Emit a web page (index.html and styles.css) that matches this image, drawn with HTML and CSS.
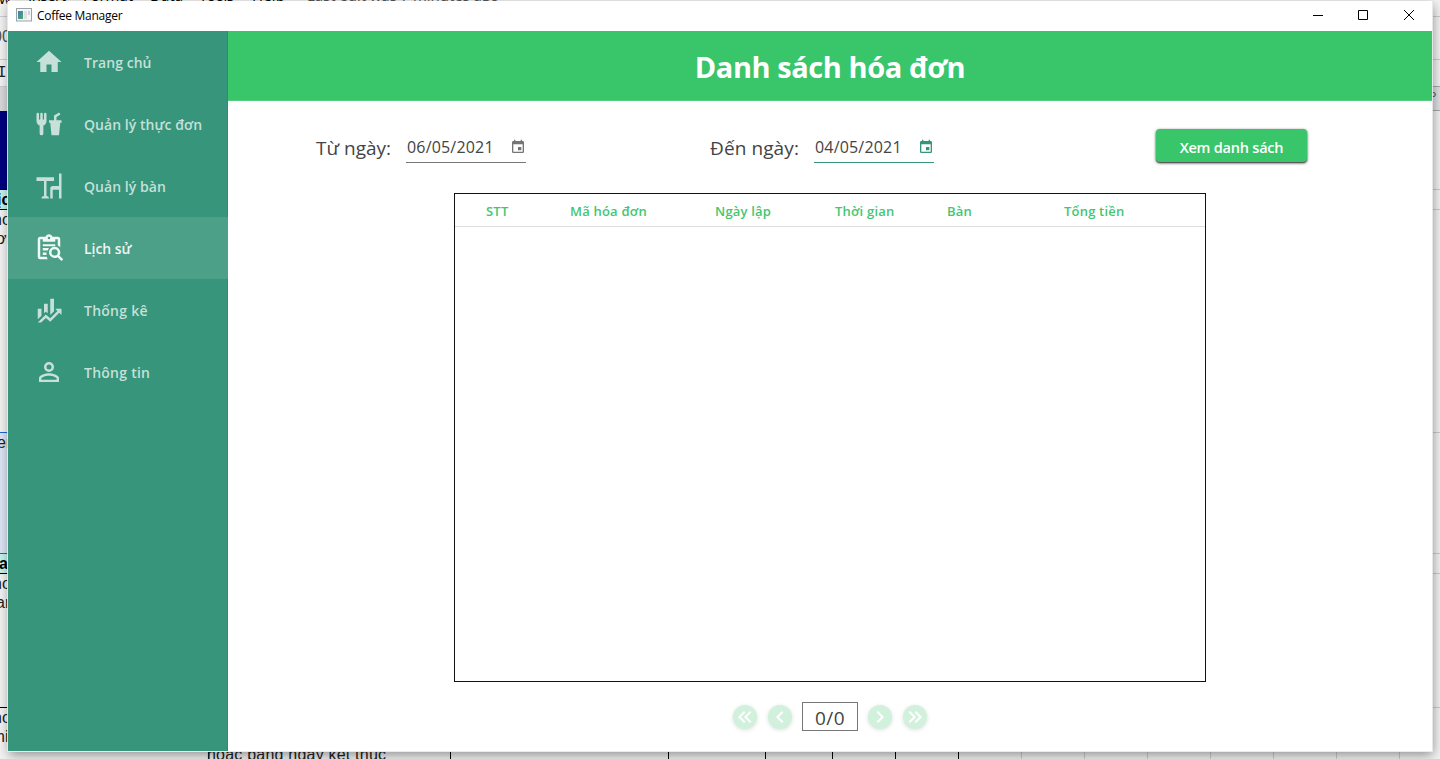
FILE: index.html
```html
<!DOCTYPE html>
<html lang="vi">
<head>
<meta charset="utf-8">
<title>Coffee Manager</title>
<link rel="stylesheet" href="styles.css">
</head>
<body>
<svg class="desktop" width="1440" height="759" viewBox="0 0 1440 759" aria-hidden="true">
  <rect width="1440" height="759" fill="#f3f3f3"/>
  <rect y="87" width="8" height="24" fill="#d9d9dc"/>
  <rect y="111" width="8" height="79" fill="#000080"/>
  <rect y="190" width="8" height="19" fill="#c4f3ef"/>
  <rect y="433" width="8" height="120" fill="#dde4f4"/>
  <rect y="554" width="8" height="19" fill="#c4f3ef"/>
  <rect x="1432" y="87" width="8" height="24" fill="#e0e1e3"/>
  <path d="M0 16.5H8M0 59.5H8M0 86.5H8M1432 16.5H1440M1432 59.5H1440M1432 189.5H1440M1432 209.5H1440M1432 432.5H1440M1432 553.5H1440M1432 573.5H1440M1432 707.5H1440M1021.5 751V759M1084.5 751V759M1147.5 751V759M1210.5 751V759M1273.5 751V759M1336.5 751V759M1399.5 751V759" stroke="#cbccd0"/>
  <path d="M1432 86.5H1440M1432 110.5H1440" stroke="#a9a9ab"/>
  <path d="M0 189.5H8M0 209.5H8M0 573.5H8M0 707.5H8M208.5 751V759M450.5 751V759M668.5 751V759M765.5 751V759M832.5 751V759M895.5 751V759M958.5 751V759" stroke="#000"/>
  <path d="M0 432.5H8M0 553.5H8" stroke="#1a66d2"/>
  <g class="menu-text">
    <text x="-1" y="4">w</text><text x="28" y="1" textLength="38">Insert</text><text x="83" y="1" textLength="50">Format</text><text x="150" y="1" textLength="33">Data</text><text x="199" y="1" textLength="35">Tools</text><text x="252" y="1" textLength="33">Help</text><text x="307" y="1" class="muted" textLength="192">Last edit was 7 minutes ago</text>
  </g>
  <g class="cell-text">
    <text x="-7" y="42" class="muted">00</text><text x="-3" y="77" class="mono">IF</text>
    <text x="-3" y="205" class="strong">ịch</text><text x="-7" y="225">ho</text><text x="-4" y="244">ơn</text>
    <text x="-3" y="448">en</text><text x="-1" y="569" class="strong">a</text><text x="-7" y="589">ho</text><text x="-4" y="608">an</text>
    <text x="-7" y="723">ho</text><text x="-4" y="742">hi</text>
    <text x="207" y="760" textLength="179">hoặc bằng ngày kết thúc</text>
    <text x="1429" y="100" class="muted small">P</text>
  </g>
</svg>

<div class="window">
  <header class="titlebar">
    <svg class="app-icon" width="16" height="14" viewBox="0 0 16 14">
      <defs><linearGradient id="pane" x1="0" y1="0" x2="1" y2="1"><stop offset="0" stop-color="#3d7db5"/><stop offset="1" stop-color="#56a86b"/></linearGradient></defs>
      <rect x=".5" y=".5" width="15" height="12.5" fill="#f4f5f6" stroke="#9aa3aa"/>
      <rect x="2" y="3" width="5" height="8" fill="url(#pane)"/>
      <rect x="8" y="3" width="3" height="8" fill="#dfe3e6"/><rect x="12" y="3" width="2" height="4" fill="#cfd6da"/>
    </svg>
    <span class="app-name">Coffee Manager</span>
    <svg class="controls" width="102" height="12" viewBox="0 0 102 12" fill="none" stroke="#000">
      <path d="M0 6.5H10M45.5 1.5H54.5V10.500H45.500ZM91 1L101 11M101 1L91 11"/>
    </svg>
  </header>
  <div class="body">
    <nav class="sidebar">
      <a class="item"><svg viewBox="0 0 24 24"><path d="M10,20V14H14V20H19V12H22L12,3L2,12H5V20H10Z"/></svg><span>Trang chủ</span></a>
      <a class="item"><svg viewBox="0 0 24 24"><path d="M3,3A1,1 0 0,0 2,4V8L2,9.5C2,11.19 3.03,12.63 4.5,13.22V19.5A1.5,1.5 0 0,0 6,21A1.5,1.5 0 0,0 7.5,19.5V13.22C8.97,12.63 10,11.19 10,9.5V8L10,4A1,1 0 0,0 9,3A1,1 0 0,0 8,4V8A0.5,0.5 0 0,1 7.5,8.5A0.5,0.5 0 0,1 7,8V4A1,1 0 0,0 6,3A1,1 0 0,0 5,4V8A0.5,0.5 0 0,1 4.5,8.5A0.5,0.5 0 0,1 4,8V4A1,1 0 0,0 3,3M19.88,3C19.75,3 19.62,3.09 19.5,3.16L16,5.25V9H12V11H13L14,21H20L21,11H22V9H18V6.34L20.5,4.84C21,4.56 21.13,4 20.84,3.5C20.63,3.14 20.26,2.95 19.88,3Z"/></svg><span>Quản lý thực đơn</span></a>
      <a class="item"><svg viewBox="0 0 24 24"><path d="M12 22H6A2 2 0 0 1 8 20V8H2V5H16V8H10V20A2 2 0 0 1 12 22M22 2V22H20V15H15V22H13V14A2 2 0 0 1 15 12H20V2Z"/></svg><span>Quản lý bàn</span></a>
      <a class="item active"><svg viewBox="0 0 24 24"><path d="M11 21H5A2 2 0 0 1 3 19V5A2 2 0 0 1 5 3H9.180C9.600 1.840 10.700 1 12 1S14.400 1.840 14.820 3H19A2 2 0 0 1 21 5V11.500A6 6 0 0 0 19 10V5H17V7H7V5H5V19H10.200A6 6 0 0 0 11 21M12 3A1 1 0 1 0 12 5A1 1 0 1 0 12 3M7 9H17V10.500H7ZM7 12H12L11 14H7ZM7 15.500H10V17.500H7ZM16.500 11A4.500 4.500 0 0 1 20.310 17.900L23.390 21L22 22.390L18.880 19.320A4.500 4.500 0 1 1 16.500 11M16.500 13A2.500 2.500 0 1 0 16.500 18A2.500 2.500 0 1 0 16.500 13Z" fill-rule="evenodd"/></svg><span>Lịch sử</span></a>
      <a class="item"><svg viewBox="0 0 24 24"><path d="M6,16.5L3,19.44V11H6M11,14.66L9.43,13.32L8,14.64V7H11M16,13L13,16V3H16M18.81,12.81L17,11H22V16L20.21,14.21L13,21.36L9.53,18.34L5.75,22H3L9.47,15.66L13,18.64"/></svg><span class="wide">Thống kê</span></a>
      <a class="item"><svg viewBox="0 0 24 24"><path d="M12,4A4,4 0 0,1 16,8A4,4 0 0,1 12,12A4,4 0 0,1 8,8A4,4 0 0,1 12,4M12,6A2,2 0 0,0 10,8A2,2 0 0,0 12,10A2,2 0 0,0 14,8A2,2 0 0,0 12,6M12,13C14.67,13 20,14.33 20,17V20H4V17C4,14.33 9.33,13 12,13M12,14.9C9.03,14.9 5.9,16.36 5.9,17V18.1H18.1V17C18.1,16.36 14.97,14.9 12,14.9Z"/></svg><span class="wide">Thông tin</span></a>
    </nav>
    <main class="content">
      <h1 class="heading"><span>Danh sách hóa đơn</span></h1>
      <section class="filters">
        <label class="from">Từ ngày:</label>
        <div class="date"><span>06/05/2021</span><svg viewBox="0 0 24 24"><path d="M19,19H5V8H19M16,1V3H8V1H6V3H5C3.89,3 3,3.89 3,5V19A2,2 0 0,0 5,21H19A2,2 0 0,0 21,19V5C21,3.89 20.1,3 19,3H18V1M17,12H12V17H17V12Z"/></svg></div>
        <label class="to">Đến ngày:</label>
        <div class="date focused"><span>04/05/2021</span><svg viewBox="0 0 24 24"><path d="M19,19H5V8H19M16,1V3H8V1H6V3H5C3.89,3 3,3.89 3,5V19A2,2 0 0,0 5,21H19A2,2 0 0,0 21,19V5C21,3.89 20.1,3 19,3H18V1M17,12H12V17H17V12Z"/></svg></div>
        <button class="view"><span>Xem danh sách</span></button>
      </section>
      <section class="table">
        <div class="thead">
          <span>STT</span><span>Mã hóa đơn</span><span>Ngày lập</span><span>Thời gian</span><span>Bàn</span><span>Tổng tiền</span>
        </div>
      </section>
      <footer class="pager">
        <a class="page"><svg viewBox="0 0 24 24"><path d="M18.41,7.41L17,6L11,12L17,18L18.41,16.59L13.83,12L18.41,7.41M12.41,7.41L11,6L5,12L11,18L12.41,16.59L7.83,12L12.41,7.41Z"/></svg></a>
        <a class="page"><svg viewBox="0 0 24 24"><path d="M15.41,16.58L10.83,12L15.41,7.41L14,6L8,12L14,18L15.41,16.58Z"/></svg></a>
        <span class="count">0/0</span>
        <a class="page"><svg viewBox="0 0 24 24"><path d="M8.59,16.58L13.17,12L8.59,7.41L10,6L16,12L10,18L8.59,16.58Z"/></svg></a>
        <a class="page"><svg viewBox="0 0 24 24"><path d="M5.59,7.41L7,6L13,12L7,18L5.59,16.59L10.17,12L5.59,7.41M11.59,7.41L13,6L19,12L13,18L11.59,16.59L16.17,12L11.59,7.41Z"/></svg></a>
      </footer>
    </main>
  </div>
</div>
</body>
</html>
```
FILE: styles.css
```css
* { box-sizing: border-box; }
body { margin: 0; width: 1440px; height: 759px; overflow: hidden; position: relative; font-family: "Open Sans", "Noto Sans", sans-serif; color: #444; }
.desktop { position: absolute; left: 0; top: 0; display: block; }
.menu-text { font: 15px "Open Sans", sans-serif; fill: #000; }
.cell-text { font: 16px "Liberation Sans", sans-serif; fill: #222; }
.desktop .muted { fill: #555; }
.desktop .mono { font-family: "Liberation Mono", monospace; }
.desktop .strong { font-weight: 700; fill: #000; }
.desktop .small { font-size: 11px; }

.window { position: absolute; left: 8px; top: 1px; width: 1424px; height: 750px; display: flex; flex-direction: column; background: #fff; box-shadow: 1px 1px 0 rgba(235,235,235,.9), -1px 1px 0 rgba(235,235,235,.9), 1px 4px 11px rgba(0,0,0,.42); }
.titlebar { height: 30px; display: flex; align-items: center; padding: 0 17px 0 8px; background: #fff; }
.app-icon { margin-top: -2px; }
.app-name { margin-left: 5px; margin-top: -2px; font-size: 12px; letter-spacing: -.27px; color: #000; white-space: nowrap; }
.controls { margin-left: auto; margin-top: -2px; }
.body { flex: 1; display: flex; min-height: 0; }

.sidebar { width: 220px; background: #36957a; border-right: 1px solid #318a70; }
.item { height: 62px; display: flex; align-items: center; padding-left: 26px; color: rgba(255,255,255,.72); font-size: 14px; font-weight: 600; letter-spacing: .05px; white-space: nowrap; }
.item .wide { letter-spacing: .25px; }
.item svg { width: 30px; height: 30px; margin-right: 20px; fill: currentColor; flex: none; }
.item.active { background: #4ca087; color: rgba(255,255,255,.92); margin-right: -1px; letter-spacing: -.05px; }

.content { flex: 1; display: flex; flex-direction: column; min-width: 0; }
.heading { margin: 0; height: 70px; display: flex; align-items: center; justify-content: center; background: #39c56a; border-bottom: 1px solid #55cd7e; color: #fff; font-size: 29px; letter-spacing: -.43px; font-weight: 700; padding-top: 1px; }
.filters { height: 92px; display: flex; align-items: center; padding-left: 88px; white-space: nowrap; }
.filters label { font-size: 19px; color: #444; padding-top: 1px; }
.from { width: 90px; }
.to { width: 104px; margin-left: 184px; letter-spacing: .1px; }
.date { width: 120px; height: 31px; display: flex; align-items: center; justify-content: space-between; border-bottom: 1px solid #777; color: #444; font-size: 16px; letter-spacing: .18px; padding-left: 1px; }
.date svg { width: 16px; height: 16px; fill: #757575; }
.date.focused { border-color: #36957a; }
.date.focused svg { fill: #36957a; }
.view { margin-left: 222px; margin-top: -3px; width: 151px; height: 33px; border: 0; border-radius: 4px; background: #39c56a; color: #fff; font: 600 14.5px "Open Sans", "Noto Sans", sans-serif; letter-spacing: -.22px; box-shadow: 0 1px 3px rgba(0,0,0,.8), 0 1px 1px rgba(0,0,0,.3); padding: 3px 0 0; }

.table { width: 752px; height: 489px; margin-left: 226px; border: 1px solid #111; }
.thead { height: 33px; display: grid; grid-template-columns: 84px 145px 120px 112px 117px 1fr; align-items: center; padding: 1px 0 0 31px; border-bottom: 1px solid #e0e0e0; color: #43c672; font-size: 13px; letter-spacing: .2px; font-weight: 600; white-space: nowrap; }

.pager { flex: 1; display: flex; align-items: center; justify-content: center; gap: 11px; padding-bottom: 0; }
.page { width: 24px; height: 24px; border-radius: 50%; background: #d1f1dd; box-shadow: 0 1px 4px rgba(0,0,0,.13); }
.page svg { width: 24px; height: 24px; display: block; fill: #fff; }
.count { width: 56px; height: 29px; margin: 0 -1px; border: 1px solid #777; display: flex; align-items: center; justify-content: center; font-size: 19px; letter-spacing: .5px; color: #444; padding-top: 2px; }
```
